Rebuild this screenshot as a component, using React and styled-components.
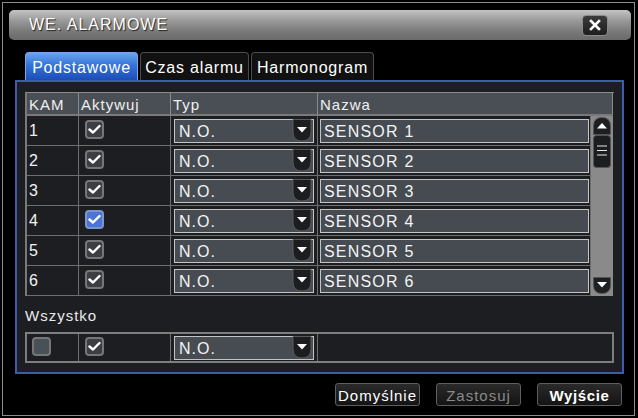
import React from "react";
import styled, { createGlobalStyle } from "styled-components";

const Global = createGlobalStyle`
  html, body { margin: 0; padding: 0; background: #000; }
  body {
    width: 638px; height: 418px; overflow: hidden;
    font-family: "Liberation Sans", Arial, sans-serif;
    color: #f2f2f2;
  }
  * { box-sizing: border-box; }
`;

const Frame = styled.div`
  margin: 2px 0 0 2px;
  width: 633px;
  height: 414px;
  border: 1px solid #8c8c8c;
  padding: 7px 3px 0 6px;
  display: flex;
  flex-direction: column;
`;

const TitleBar = styled.div`
  height: 30px;
  border-radius: 5px;
  background: linear-gradient(#c4c4c4 0%, #9a9a9a 35%, #7a7a7a 70%, #6a6a6a 100%);
  display: flex;
  align-items: center;
  justify-content: space-between;
  padding: 0 23px 0 20px;
`;

const Title = styled.div`
  font-size: 16px;
  letter-spacing: 1px;
  color: #fff;
  text-shadow: 1px 1px 1px #222;
`;

const CloseBtn = styled.div`
  width: 26px;
  height: 21px;
  border-radius: 4px;
  border: 1px solid #8a8a8a;
  background: linear-gradient(#3a3a3a, #1e1e1e);
  display: flex;
  align-items: center;
  justify-content: center;
`;

const Tabs = styled.div`
  margin: 12px 0 0 16px;
  height: 28px;
  display: flex;
  gap: 2px;
`;

const Tab = styled.div`
  width: ${(p) => p.$w}px;
  height: 28px;
  padding: 3px 0 0 0;
  font-size: 16px;
  letter-spacing: 0.8px;
  border-radius: 4px 4px 0 0;
  display: flex;
  align-items: center;
  justify-content: center;
  white-space: nowrap;
  color: #fff;
  border: 1px solid ${(p) => (p.$active ? "#7aa6e8" : "#4c4c4c")};
  border-bottom: none;
  background: ${(p) =>
    p.$active ? "linear-gradient(#6aa4ee 0%, #3574d8 45%, #1c4cb8 100%)" : "#111"};
`;

const Panel = styled.div`
  margin-left: 6px;
  width: 609px;
  height: 294px;
  border: 2px solid #3d5cae;
  background: #1d1e22;
  padding: 10px 8px 0 8px;
  display: flex;
  flex-direction: column;
`;

const Table = styled.div`
  width: 589px;
  border-left: 2px solid #7a7a7a;
  border-top: 1px solid #8a8a8a;
`;

const Grid = styled.div`
  display: grid;
  grid-template-columns: 52px 92px 147px ${(p) => p.$last || "273px"};
`;

const HeadCell = styled.div`
  height: 23px;
  background: #4a4f55;
  border-right: 1px solid #8a8a8a;
  border-bottom: 2px solid #7a7a7a;
  font-size: 15px;
  letter-spacing: 1px;
  padding: 3px 0 0 2px;
  color: #f0f0f0;
`;

const Body = styled.div`
  display: flex;
`;

const Rows = styled.div`
  display: flex;
  flex-direction: column;
`;

const Cell = styled.div`
  height: 30px;
  border-right: 1px solid #6e6e6e;
  border-bottom: 1px solid #6e6e6e;
  display: flex;
  align-items: center;
  padding-left: ${(p) => p.$pl || 0}px;
  padding-right: ${(p) => p.$pr || 0}px;
  font-size: 16px;
  letter-spacing: 1px;
`;

const Check = styled.div`
  width: 19px;
  height: 19px;
  border-radius: 4px;
  border: 2px solid ${(p) => (p.$blue ? "#7d95c8" : "#767676")};
  background: ${(p) => (p.$blue ? "#4b74d6" : p.$empty ? "#485058" : "#3b3e42")};
  margin-top: -3px;
  display: flex;
  align-items: center;
  justify-content: center;
`;

const Select = styled.div`
  width: 100%;
  height: 24px;
  border: 1px solid #c4c4c4;
  background: #464c52;
  display: flex;
  align-items: center;
  justify-content: space-between;
  padding: 3px 0 0 4px;
  font-size: 16px;
  letter-spacing: 1px;
  color: #f4f4f4;
`;

const Input = styled.div`
  width: 100%;
  height: 24px;
  border: 1px solid #c4c4c4;
  background: #454b51;
  display: flex;
  align-items: center;
  padding: 3px 0 0 3px;
  font-size: 16px;
  letter-spacing: 1.2px;
  color: #f4f4f4;
`;

const ScrollTrack = styled.div`
  width: 22px;
  background: #8a8a8a;
  border-right: 1px solid #8a8a8a;
  display: flex;
  flex-direction: column;
  align-items: center;
  padding-top: 1px;
  justify-content: space-between;
  padding-bottom: 2px;
`;

const ScrollTop = styled.div`
  display: flex;
  flex-direction: column;
`;

const Label = styled.div`
  height: 20px;
  margin: 9px 0 7px 0;
  font-size: 15px;
  letter-spacing: 1px;
  padding-top: 2px;
  color: #eaeaea;
`;

const AllRow = styled(Grid)`
  border: 2px solid #7e7e7e;
  width: 589px;
`;

const AllCell = styled.div`
  height: 27px;
  border-right: ${(p) => (p.$last ? "none" : "1px solid #6e6e6e")};
  display: flex;
  align-items: center;
  padding-left: ${(p) => p.$pl || 0}px;
  padding-right: ${(p) => p.$pr || 0}px;
`;

const Buttons = styled.div`
  margin: 9px 9px 0 0;
  display: flex;
  justify-content: flex-end;
  gap: 16px;
`;

const Button = styled.div`
  width: 85px;
  height: 23px;
  border-radius: 3px;
  border: 1px solid #5e5e5e;
  background: linear-gradient(#2a2a2a, #141414);
  display: flex;
  align-items: center;
  justify-content: center;
  font-size: 15px;
  letter-spacing: ${(p) => (p.$bold ? 0.6 : 1)}px;
  font-weight: ${(p) => (p.$bold ? 700 : 400)};
  color: ${(p) => (p.$disabled ? "#8a8a8a" : "#fff")};
  padding-top: 1px;
`;

const CheckMark = () => (
  <svg width="13" height="11" viewBox="0 0 13 11">
    <path d="M1.5 5.5 L5 8.5 L11.5 2" fill="none" stroke="#fff" strokeWidth="2.4" strokeLinecap="round" strokeLinejoin="round" />
  </svg>
);

const DropArrow = () => (
  <svg width="20" height="23" viewBox="0 0 20 23" style={{ marginRight: 1, marginTop: -3 }}>
    <path d="M1 0.5 H19 V13 Q19 22 10 22 Q1 22 1 13 Z" fill="#1c1d1f" stroke="#5a5a5a" strokeWidth="1" />
    <path d="M5 8 H15 L10 13.5 Z" fill="#fff" />
  </svg>
);

const CloseIcon = () => (
  <svg width="12" height="12" viewBox="0 0 12 12">
    <path d="M2 2 L10 10 M10 2 L2 10" stroke="#fff" strokeWidth="2.6" strokeLinecap="square" />
  </svg>
);

const ScrollUp = () => (
  <svg width="18" height="18" viewBox="0 0 18 18">
    <path d="M0.5 17.5 V9 Q0.5 0.5 9 0.5 Q17.5 0.5 17.5 9 V17.5 Z" fill="#1e1f21" stroke="#555" />
    <path d="M4 11.5 H14 L9 6 Z" fill="#fff" />
  </svg>
);

const ScrollThumb = () => (
  <svg width="18" height="33" viewBox="0 0 18 33">
    <rect x="0.5" y="0.5" width="17" height="32" rx="3" fill="#1c1d1f" stroke="#555" />
    <path d="M4 11 H14 M4 15.5 H14 M4 20 H14" stroke="#e8e8e8" strokeWidth="1.2" />
  </svg>
);

const ScrollDown = () => (
  <svg width="18" height="17" viewBox="0 0 18 17">
    <path d="M0.5 0.5 H17.5 V8 Q17.5 16.5 9 16.5 Q0.5 16.5 0.5 8 Z" fill="#1e1f21" stroke="#555" />
    <path d="M4 5 H14 L9 10.5 Z" fill="#fff" />
  </svg>
);

const rows = [1, 2, 3, 4, 5, 6];

export default function App() {
  return (
    <>
      <Global />
      <Frame>
        <TitleBar>
          <Title>WE. ALARMOWE</Title>
          <CloseBtn>
            <CloseIcon />
          </CloseBtn>
        </TitleBar>
        <Tabs>
          <Tab $active $w={113}>Podstawowe</Tab>
          <Tab $w={109}>Czas alarmu</Tab>
          <Tab $w={123}>Harmonogram</Tab>
        </Tabs>
        <Panel>
          <Table>
            <Grid $last="295px">
              <HeadCell>KAM</HeadCell>
              <HeadCell>Aktywuj</HeadCell>
              <HeadCell>Typ</HeadCell>
              <HeadCell>Nazwa</HeadCell>
            </Grid>
            <Body>
              <Rows>
                {rows.map((n) => (
                  <Grid key={n}>
                    <Cell $pl={2}>{n}</Cell>
                    <Cell $pl={6}>
                      <Check $blue={n === 4}>
                        <CheckMark />
                      </Check>
                    </Cell>
                    <Cell $pl={3} $pr={3}>
                      <Select>
                        N.O.
                        <DropArrow />
                      </Select>
                    </Cell>
                    <Cell $pl={2} $pr={1}>
                      <Input>SENSOR {n}</Input>
                    </Cell>
                  </Grid>
                ))}
              </Rows>
              <ScrollTrack>
                <ScrollTop>
                  <ScrollUp />
                  <ScrollThumb />
                </ScrollTop>
                <ScrollDown />
              </ScrollTrack>
            </Body>
          </Table>
          <Label>Wszystko</Label>
          <AllRow $last="294px">
            <AllCell $pl={5}>
              <Check $empty />
            </AllCell>
            <AllCell $pl={6}>
              <Check>
                <CheckMark />
              </Check>
            </AllCell>
            <AllCell $pl={3} $pr={3}>
              <Select>
                N.O.
                <DropArrow />
              </Select>
            </AllCell>
            <AllCell $last />
          </AllRow>
        </Panel>
        <Buttons>
          <Button>Domyślnie</Button>
          <Button $disabled>Zastosuj</Button>
          <Button $bold>Wyjście</Button>
        </Buttons>
      </Frame>
    </>
  );
}
